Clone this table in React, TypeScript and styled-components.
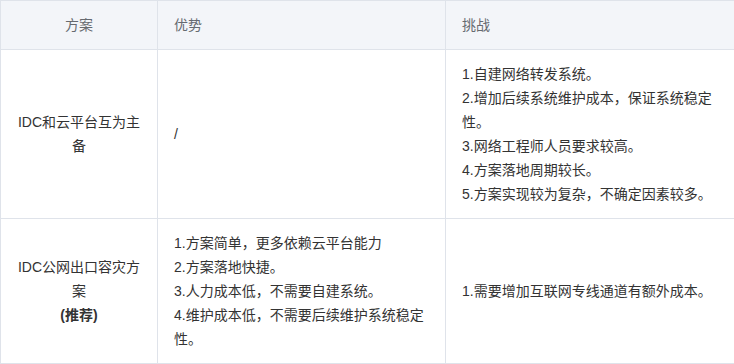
import styled, { createGlobalStyle } from "styled-components"

const GlobalStyle = createGlobalStyle`
  body {
    margin: 0;
    background: #ffffff;
    font-family: "Liberation Sans", "Noto Sans CJK SC", sans-serif;
  }
`

const Table = styled.table`
  width: 734px;
  table-layout: fixed;
  border-collapse: collapse;
  font-size: 14px;
  line-height: 24px;
`

type AlignProps = {
  $center?: boolean
}

const HeadCell = styled.th<AlignProps>`
  padding: 12px 16px;
  background: #f3f5f9;
  border: 1px solid #dfe3ea;
  color: #666a70;
  font-weight: normal;
  text-align: ${(props) => (props.$center ? "center" : "left")};
`

const Cell = styled.td<AlignProps>`
  padding: 12px 16px;
  border: 1px solid #dfe3ea;
  color: #333333;
  vertical-align: middle;
  text-align: ${(props) => (props.$center ? "center" : "left")};
`

const Line = styled.div``

const Tag = styled.div`
  font-weight: bold;
`

type Plan = {
  name: string[]
  recommended?: boolean
  pros: string[]
  cons: string[]
}

const plans: Plan[] = [
  {
    name: ["IDC和云平台互为主备"],
    pros: ["/"],
    cons: [
      "1.自建网络转发系统。",
      "2.增加后续系统维护成本，保证系统稳定性。",
      "3.网络工程师人员要求较高。",
      "4.方案落地周期较长。",
      "5.方案实现较为复杂，不确定因素较多。",
    ],
  },
  {
    name: ["IDC公网出口容灾方案"],
    recommended: true,
    pros: [
      "1.方案简单，更多依赖云平台能力",
      "2.方案落地快捷。",
      "3.人力成本低，不需要自建系统。",
      "4.维护成本低，不需要后续维护系统稳定性。",
    ],
    cons: ["1.需要增加互联网专线通道有额外成本。"],
  },
]

function App() {
  return (
    <>
      <GlobalStyle />
      <Table>
        <colgroup>
          <col style={{ width: 157 }} />
          <col style={{ width: 288 }} />
          <col style={{ width: 289 }} />
        </colgroup>
        <thead>
          <tr>
            <HeadCell $center>方案</HeadCell>
            <HeadCell>优势</HeadCell>
            <HeadCell>挑战</HeadCell>
          </tr>
        </thead>
        <tbody>
          {plans.map((plan) => (
            <tr key={plan.name[0]}>
              <Cell $center>
                {plan.name.map((n) => (
                  <Line key={n}>{n}</Line>
                ))}
                {plan.recommended && <Tag>(推荐)</Tag>}
              </Cell>
              <Cell>
                {plan.pros.map((p) => (
                  <Line key={p}>{p}</Line>
                ))}
              </Cell>
              <Cell>
                {plan.cons.map((c) => (
                  <Line key={c}>{c}</Line>
                ))}
              </Cell>
            </tr>
          ))}
        </tbody>
      </Table>
    </>
  )
}

export default App
